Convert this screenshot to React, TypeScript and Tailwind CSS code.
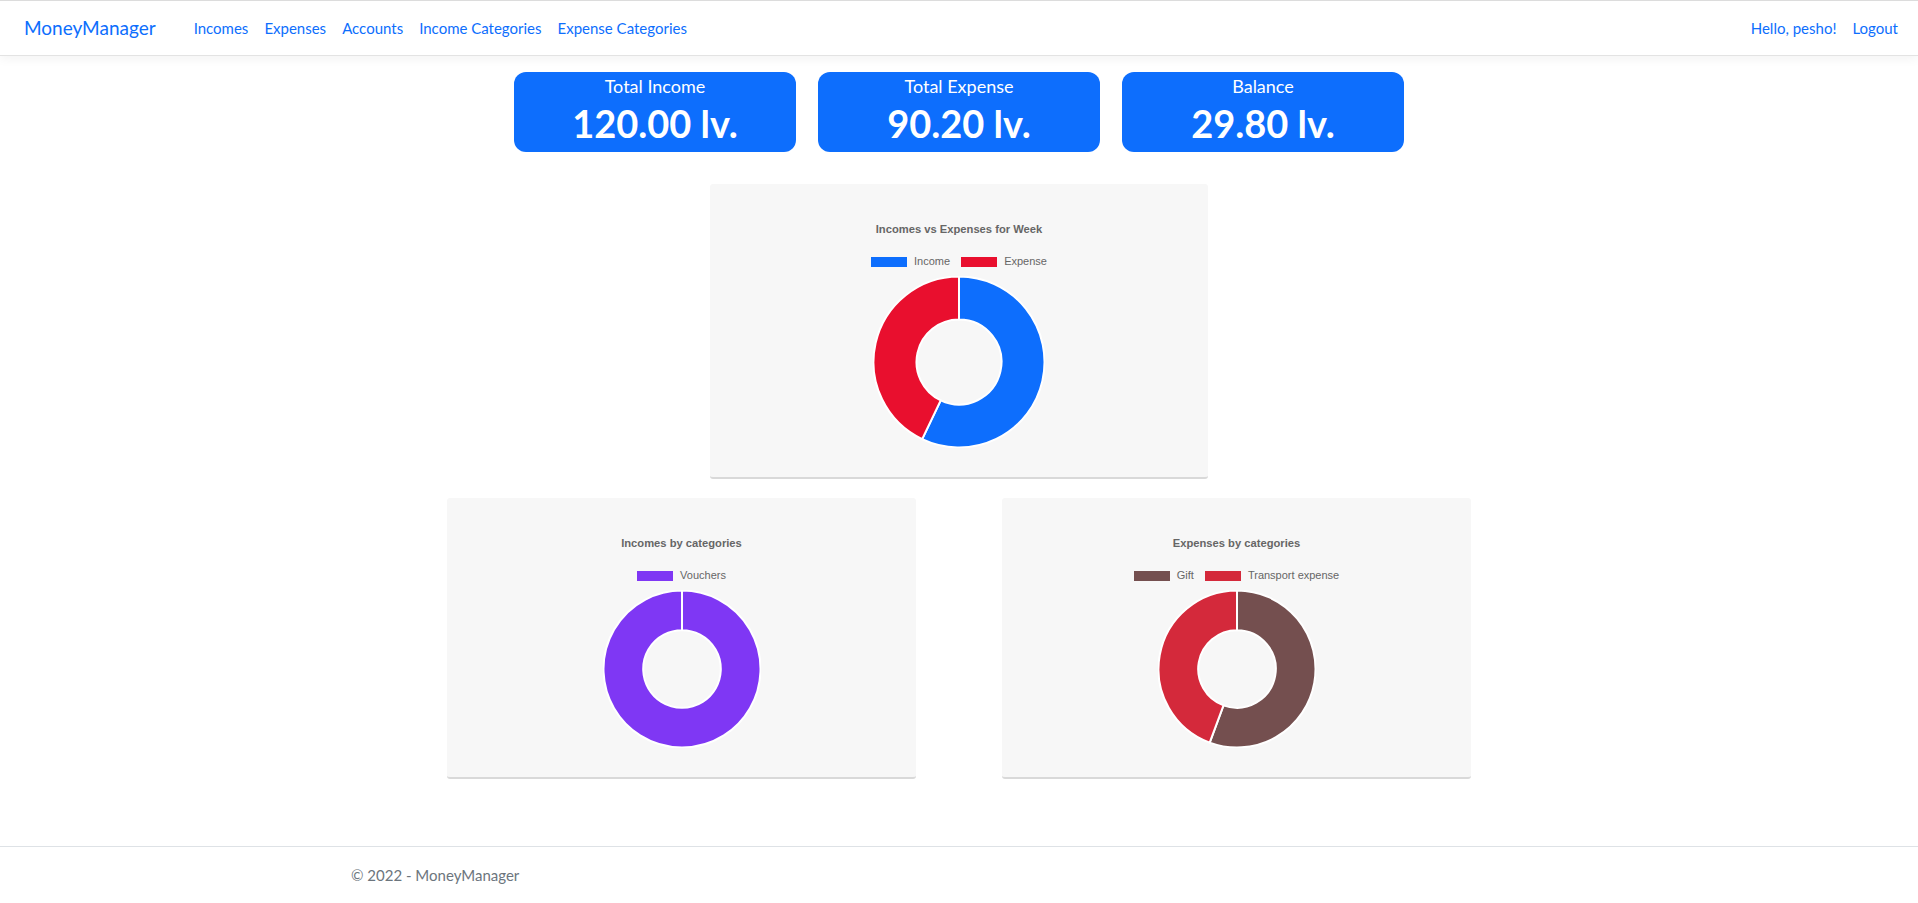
import React from "react";

type Slice = { label: string; value: number; color: string };

const pt = (cx: number, cy: number, r: number, a: number) => {
  const rad = (a * Math.PI) / 180;
  return `${(cx + r * Math.sin(rad)).toFixed(3)} ${(cy - r * Math.cos(rad)).toFixed(3)}`;
};

function arc(cx: number, cy: number, r0: number, r1: number, a0: number, a1: number) {
  const large = a1 - a0 > 180 ? 1 : 0;
  return [
    `M ${pt(cx, cy, r1, a0)}`,
    `A ${r1} ${r1} 0 ${large} 1 ${pt(cx, cy, r1, a1)}`,
    `L ${pt(cx, cy, r0, a1)}`,
    `A ${r0} ${r0} 0 ${large} 0 ${pt(cx, cy, r0, a0)}`,
    "Z",
  ].join(" ");
}

function Donut({ data, size, outer, inner }: { data: Slice[]; size: number; outer: number; inner: number }) {
  const total = data.reduce((s, d) => s + d.value, 0);
  const c = size / 2;
  let start = 0;
  return (
    <svg width={size} height={size} viewBox={`0 0 ${size} ${size}`}>
      {data.map((d) => {
        const sweep = (d.value / total) * 360;
        const end = Math.min(start + sweep, 359.999);
        const path = arc(c, c, inner, outer, start, end);
        start += sweep;
        return <path key={d.label} d={path} fill={d.color} stroke="#fff" strokeWidth={2} />;
      })}
    </svg>
  );
}

function ChartCard({
  title,
  data,
  className,
  size,
  outer,
  inner,
  padTop,
}: {
  title: string;
  data: Slice[];
  className: string;
  size: number;
  outer: number;
  inner: number;
  padTop: string;
}) {
  return (
    <div className={`flex flex-col items-center rounded-[3px] border-b-2 border-[#d9d9d9] bg-[#f7f7f7] ${className}`}>
      <div className={`${padTop} h-[13px] text-[11.2px] font-bold leading-[13px] text-[#666]`} style={{ boxSizing: "content-box" }}>
        {title}
      </div>
      <div className="mt-[19px] flex h-[13px] items-center gap-[11px] text-[11px] leading-[13px] text-[#666]">
        {data.map((d) => (
          <div key={d.label} className="flex items-center gap-[7px]">
            <span className="inline-block h-[10px] w-[36px]" style={{ background: d.color }} />
            <span>{d.label}</span>
          </div>
        ))}
      </div>
      <div className="mt-[8px]">
        <Donut data={data} size={size} outer={outer} inner={inner} />
      </div>
    </div>
  );
}

const totals = [
  { title: "Total Income", amount: "120.00 lv." },
  { title: "Total Expense", amount: "90.20 lv." },
  { title: "Balance", amount: "29.80 lv." },
];

export default function App() {
  const sans = { fontFamily: "Lato, 'Noto Sans', sans-serif" };
  const chart = { fontFamily: "'Liberation Sans', Arial, sans-serif" };
  return (
    <div className="flex min-h-screen flex-col bg-white" style={sans}>
      <nav className="flex h-[56px] items-center border-y border-t-[#dcdcdc] border-b-[#e3e3e3] bg-white pl-[24px] pr-[12px] shadow-[0_3px_10px_rgba(0,0,0,0.05)]">
        <a className="mr-[30px] text-[19px] text-[#0d6efd]">MoneyManager</a>
        <div className="flex text-[15px] text-[#0d6efd]">
          {["Incomes", "Expenses", "Accounts", "Income Categories", "Expense Categories"].map((l) => (
            <a key={l} className="px-[8px]">
              {l}
            </a>
          ))}
        </div>
        <div className="ml-auto flex text-[15px] text-[#0d6efd]">
          <a className="px-[8px]">Hello, pesho!</a>
          <a className="px-[8px]">Logout</a>
        </div>
      </nav>

      <main className="flex flex-col items-center pt-[16px]">
        <div className="flex gap-[22px]">
          {totals.map((t) => (
            <div
              key={t.title}
              className="flex h-[80px] w-[282px] flex-col items-center rounded-[12px] bg-[#0d6efd] pt-[3px] text-white"
            >
              <div className="h-[22px] text-[18px] leading-[22px]">{t.title}</div>
              <div className="mt-[2px] text-[38px] font-bold leading-[48px]">{t.amount}</div>
            </div>
          ))}
        </div>

        <div className="mt-[32px]" style={chart}>
          <ChartCard
            title="Incomes vs Expenses for Week"
            className="h-[295px] w-[498px]"
            padTop="pt-[39px]"
            size={172}
            outer={85.5}
            inner={42.5}
            data={[
              { label: "Income", value: 120, color: "#0d6efd" },
              { label: "Expense", value: 90.2, color: "#e90f2e" },
            ]}
          />
        </div>

        <div className="mt-[19px] flex gap-[86px]" style={chart}>
          <ChartCard
            title="Incomes by categories"
            className="h-[281px] w-[469px]"
            padTop="pt-[39px]"
            size={158}
            outer={78.5}
            inner={38.8}
            data={[{ label: "Vouchers", value: 120, color: "#7f37f4" }]}
          />
          <ChartCard
            title="Expenses by categories"
            className="h-[281px] w-[469px]"
            padTop="pt-[39px]"
            size={158}
            outer={78.5}
            inner={38.8}
            data={[
              { label: "Gift", value: 50.2, color: "#744f4f" },
              { label: "Transport expense", value: 40, color: "#d4293b" },
            ]}
          />
        </div>
      </main>

      <footer className="mt-[67px] h-[57px] border-t border-[#dee2e6]">
        <div className="mx-auto w-[1216px] text-[15px] leading-[56px] text-[#6c757d]">© 2022 - MoneyManager</div>
      </footer>
    </div>
  );
}
